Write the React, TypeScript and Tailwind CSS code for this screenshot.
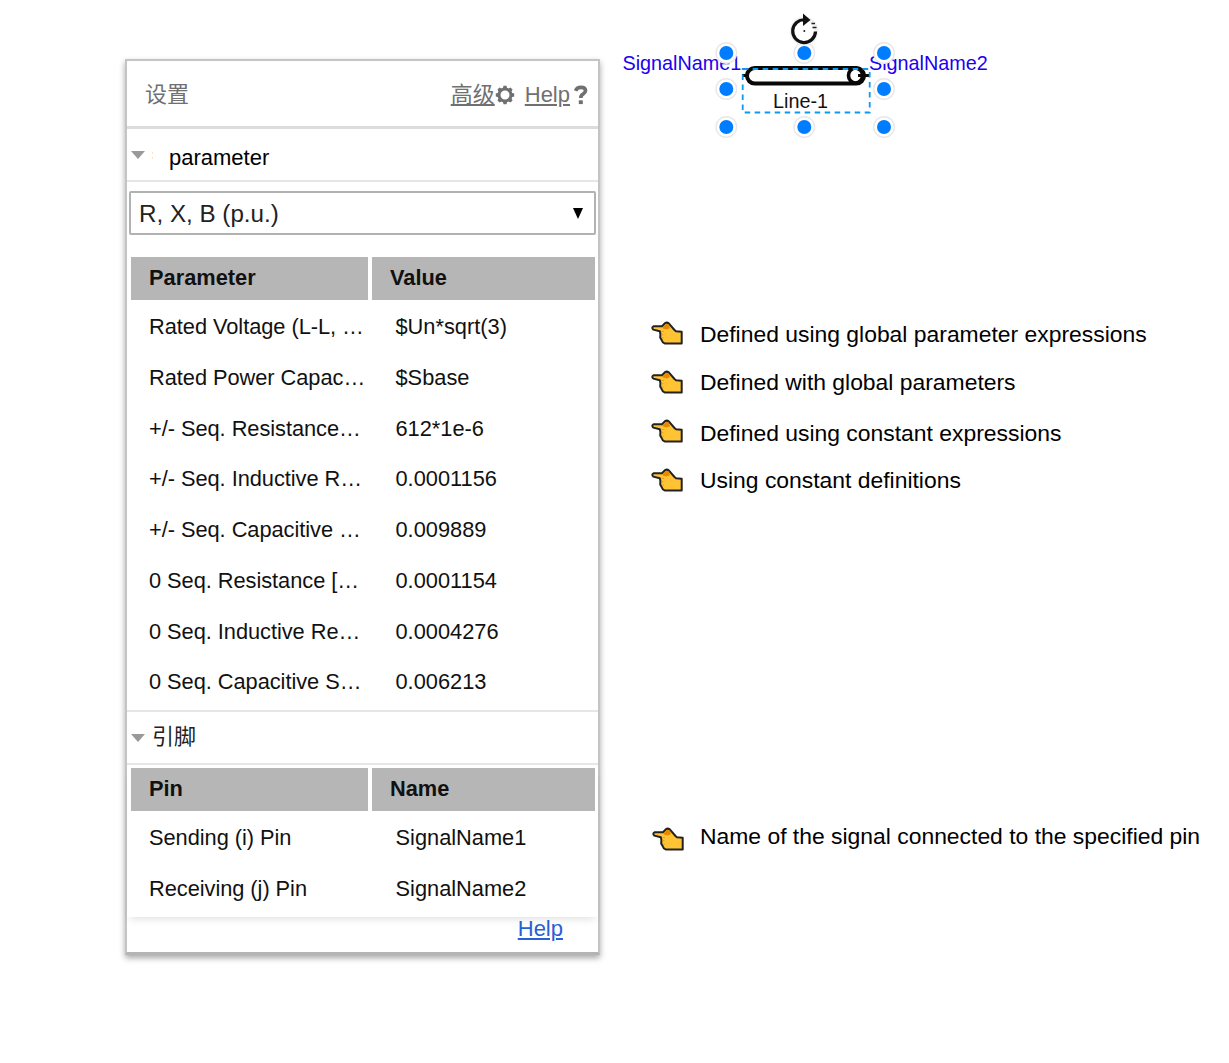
const parameters = [
  ["Rated Voltage (L-L, …", "$Un*sqrt(3)"],
  ["Rated Power Capac…", "$Sbase"],
  ["+/- Seq. Resistance…", "612*1e-6"],
  ["+/- Seq. Inductive R…", "0.0001156"],
  ["+/- Seq. Capacitive …", "0.009889"],
  ["0 Seq. Resistance […", "0.0001154"],
  ["0 Seq. Inductive Re…", "0.0004276"],
  ["0 Seq. Capacitive S…", "0.006213"],
];

const pins = [
  ["Sending (i) Pin", "SignalName1"],
  ["Receiving (j) Pin", "SignalName2"],
];

function Table({ head, rows }: { head: string[]; rows: string[][] }) {
  return (
    <div>
      <div className="flex h-[43px] gap-1 pl-1 pr-[3px] text-[21.8px] font-bold leading-[42px] text-[#111]">
        <div className="w-[237px] bg-[#b6b6b6] pl-[18px]">{head[0]}</div>
        <div className="flex-1 bg-[#b6b6b6] pl-[18px]">{head[1]}</div>
      </div>
      <div className="pt-[2px]">
        {rows.map(([name, value]) => (
          <div key={name} className="flex h-[50.75px] pl-[22px] text-[21.8px] leading-[49px] text-[#111]">
            <div className="w-[246.5px] whitespace-nowrap tracking-[-0.04px]">{name}</div>
            <div className="whitespace-nowrap">{value}</div>
          </div>
        ))}
      </div>
    </div>
  );
}

function Caret() {
  return <div className="h-0 w-0 border-x-[7.5px] border-t-8 border-x-transparent border-t-[#999]" />;
}

function Gear() {
  return (
    <svg viewBox="-10 -10 20 20" className="h-5 w-5 text-[#707070]">
      <circle r="6" fill="none" stroke="currentColor" strokeWidth="3" />
      {[0, 45, 90, 135, 180, 225, 270, 315].map((a) => (
        <path key={a} d="M-2.2 -6.6L-1.5 -9.2H1.5L2.2 -6.6Z" fill="currentColor" transform={`rotate(${a})`} />
      ))}
    </svg>
  );
}

function Question() {
  return (
    <svg viewBox="0 0 14 20" className="ml-1 h-5 w-[14px] text-[#707070]" fill="none" stroke="currentColor">
      <path d="M1.6 5.8Q2.8 2.3 6.8 2.3Q11.5 2.3 11.5 5.6Q11.5 7.6 9.2 9Q6.8 10.4 6.8 13" strokeWidth="3.7" />
      <path d="M4.8 17.2H8.8" strokeWidth="3.8" />
    </svg>
  );
}

function Hand() {
  return (
    <svg viewBox="0 0 34 26" className="h-[26px] w-[34px] shrink-0">
      <path
        d="M3.5 6.3H12L15 3.2Q16.8 2 18.8 3.3L24.5 10L26 11.2L31.7 11.8V23.4H14.6Q12.3 22.5 11.6 20L10.2 17.5L10.4 14L9.8 11.3L3.3 9.6Q1.2 7.5 3.5 6.3Z"
        fill="#ffc334"
        stroke="#222"
        strokeWidth="2"
        strokeLinejoin="round"
      />
      <path d="M12.5 7L15.8 4.1Q18 3.4 18.8 5L20 8.2L16.5 9.5L13 8.5Z" fill="#e58a00" />
      <path d="M11.3 11.5H14M11.5 14.7H13.5M12.4 18H14" stroke="#e9a11b" strokeWidth="1" />
    </svg>
  );
}

function Panel() {
  return (
    <div className="ml-[125px] mt-[59px] h-[896px] w-[475px] shrink-0 border-2 border-b-[3px] border-[#c4c4c4] border-b-[#b4b4b4] bg-white shadow-[0_3px_6px_rgba(0,0,0,0.35)]">
      <div className="flex h-[68px] items-center border-b-[3px] border-[#dcdcdc] pl-[18px] pr-[10px] pt-[2px] text-[22px] text-[#707070]">
        <span>设置</span>
        <span className="ml-auto underline decoration-2 underline-offset-[2px]">高级</span>
        <Gear />
        <span className="ml-[10px] underline decoration-2 underline-offset-[2px]">Help</span>
        <Question />
      </div>
      <div className="flex h-[53px] items-center border-b-2 border-[#e6e6e6] pl-1">
        <Caret />
        <div className="ml-[7px] flex w-[17px] flex-col gap-[3px] pt-[2px]">
          <div className="h-[2px] w-px bg-[#ffe3b0]" />
          <div className="h-[2px] w-px bg-[#ffe3b0]" />
        </div>
        <span className="pt-[5px] text-[22px] text-black">parameter</span>
      </div>
      <div className="mx-[2px] mt-[9px] flex h-[44px] items-center justify-between rounded-[2px] border-2 border-[#b0b3b1] pl-2 pr-[11px] text-[24.2px] text-[#222]">
        <span className="pt-[3px]">R, X, B (p.u.)</span>
        <div className="h-0 w-0 border-x-[5.5px] border-t-[11px] border-x-transparent border-t-black" />
      </div>
      <div className="mt-[22px] h-[453px]">
        <Table head={["Parameter", "Value"]} rows={parameters} />
      </div>
      <div className="flex h-[55px] items-center border-y-2 border-[#e6e6e6] pl-1">
        <Caret />
        <span className="ml-[7px] pb-[2px] text-[22px] text-[#222]">引脚</span>
      </div>
      <div className="mt-[3px] h-[149px] shadow-[0_5px_8px_-3px_rgba(0,0,0,0.12)]">
        <Table head={["Pin", "Name"]} rows={pins} />
      </div>
      <div className="pr-[35px] text-right text-[22px] leading-[23px] text-[#2860d8]">
        <span className="underline decoration-2 underline-offset-[2px]">Help</span>
      </div>
    </div>
  );
}

const handles = [
  [126.3, 53], [204.3, 53], [284, 53],
  [126.3, 89], [284, 89],
  [126.3, 127], [204.3, 127], [284, 127],
];

function LineElement() {
  return (
    <div className="relative h-[310px] w-full text-[19.8px] leading-6">
      <span className="absolute left-[22.5px] top-[51px] text-[#2000f0]">SignalName1</span>
      <span className="absolute left-[269px] top-[51px] text-[#2000f0]">SignalName2</span>
      <span className="absolute left-[173px] top-[89px] text-[#181010]">Line-1</span>
      <svg viewBox="0 0 400 150" className="absolute left-0 top-0 h-[150px] w-[400px]" fill="none">
        <rect x="147" y="68" width="117" height="15.5" rx="7.75" stroke="#080808" strokeWidth="4" />
        <ellipse cx="255.5" cy="75.5" rx="7" ry="7.5" stroke="#080808" strokeWidth="3.6" />
        <path d="M142 75.5H147M258 75.5H270" stroke="#080808" strokeWidth="3.2" />
        <rect x="142.7" y="69" width="127" height="43.5" stroke="#0a9cf5" strokeWidth="1.8" strokeDasharray="5.5 4.5" />
        {handles.map(([x, y]) => (
          <g key={`${x}-${y}`}>
            <circle cx={x} cy={y} r="11" fill="#e8e8e8" />
            <circle cx={x} cy={y} r="9.6" fill="#fff" />
            <circle cx={x} cy={y} r="7" fill="#007dff" />
          </g>
        ))}
        <circle cx="204" cy="31" r="14.5" fill="#f2f2f2" />
        <circle cx="204" cy="31" r="10" fill="#fff" />
        <path d="M205 19.8A11.4 11.4 0 1 0 215.5 31.5" stroke="#111" strokeWidth="3.2" />
        <path d="M203 13.5L210.5 20L203 26Z" fill="#111" />
        <path d="M211.5 23.5H215M212.5 27.5H216.5" stroke="#222" strokeWidth="1.7" />
        <circle cx="204.3" cy="31" r="1" fill="#222" />
      </svg>
    </div>
  );
}

function Note({ text, className }: { text: string; className: string }) {
  return (
    <div className="flex h-[26px] items-start whitespace-nowrap text-[22.9px] leading-[26px] text-black">
      <Hand />
      <span className={className}>{text}</span>
    </div>
  );
}

export default function App() {
  return (
    <div className="flex h-[1063px] w-[1229px] overflow-hidden bg-white font-['Liberation_Sans','Noto_Sans_CJK_SC',sans-serif]">
      <Panel />
      <div className="w-[629px]">
        <LineElement />
        <div className="flex flex-col gap-[23px] pl-[50px] pt-[10px]">
          <Note className="ml-4 mt-[1px]" text="Defined using global parameter expressions" />
          <Note className="ml-4" text="Defined with global parameters" />
          <Note className="ml-4 mt-[2px]" text="Defined using constant expressions" />
          <Note className="ml-4" text="Using constant definitions" />
        </div>
        <div className="pl-[51px] pt-[333px]">
          <Note className="ml-[15px] mt-[-3px]" text="Name of the signal connected to the specified pin" />
        </div>
      </div>
    </div>
  );
}
